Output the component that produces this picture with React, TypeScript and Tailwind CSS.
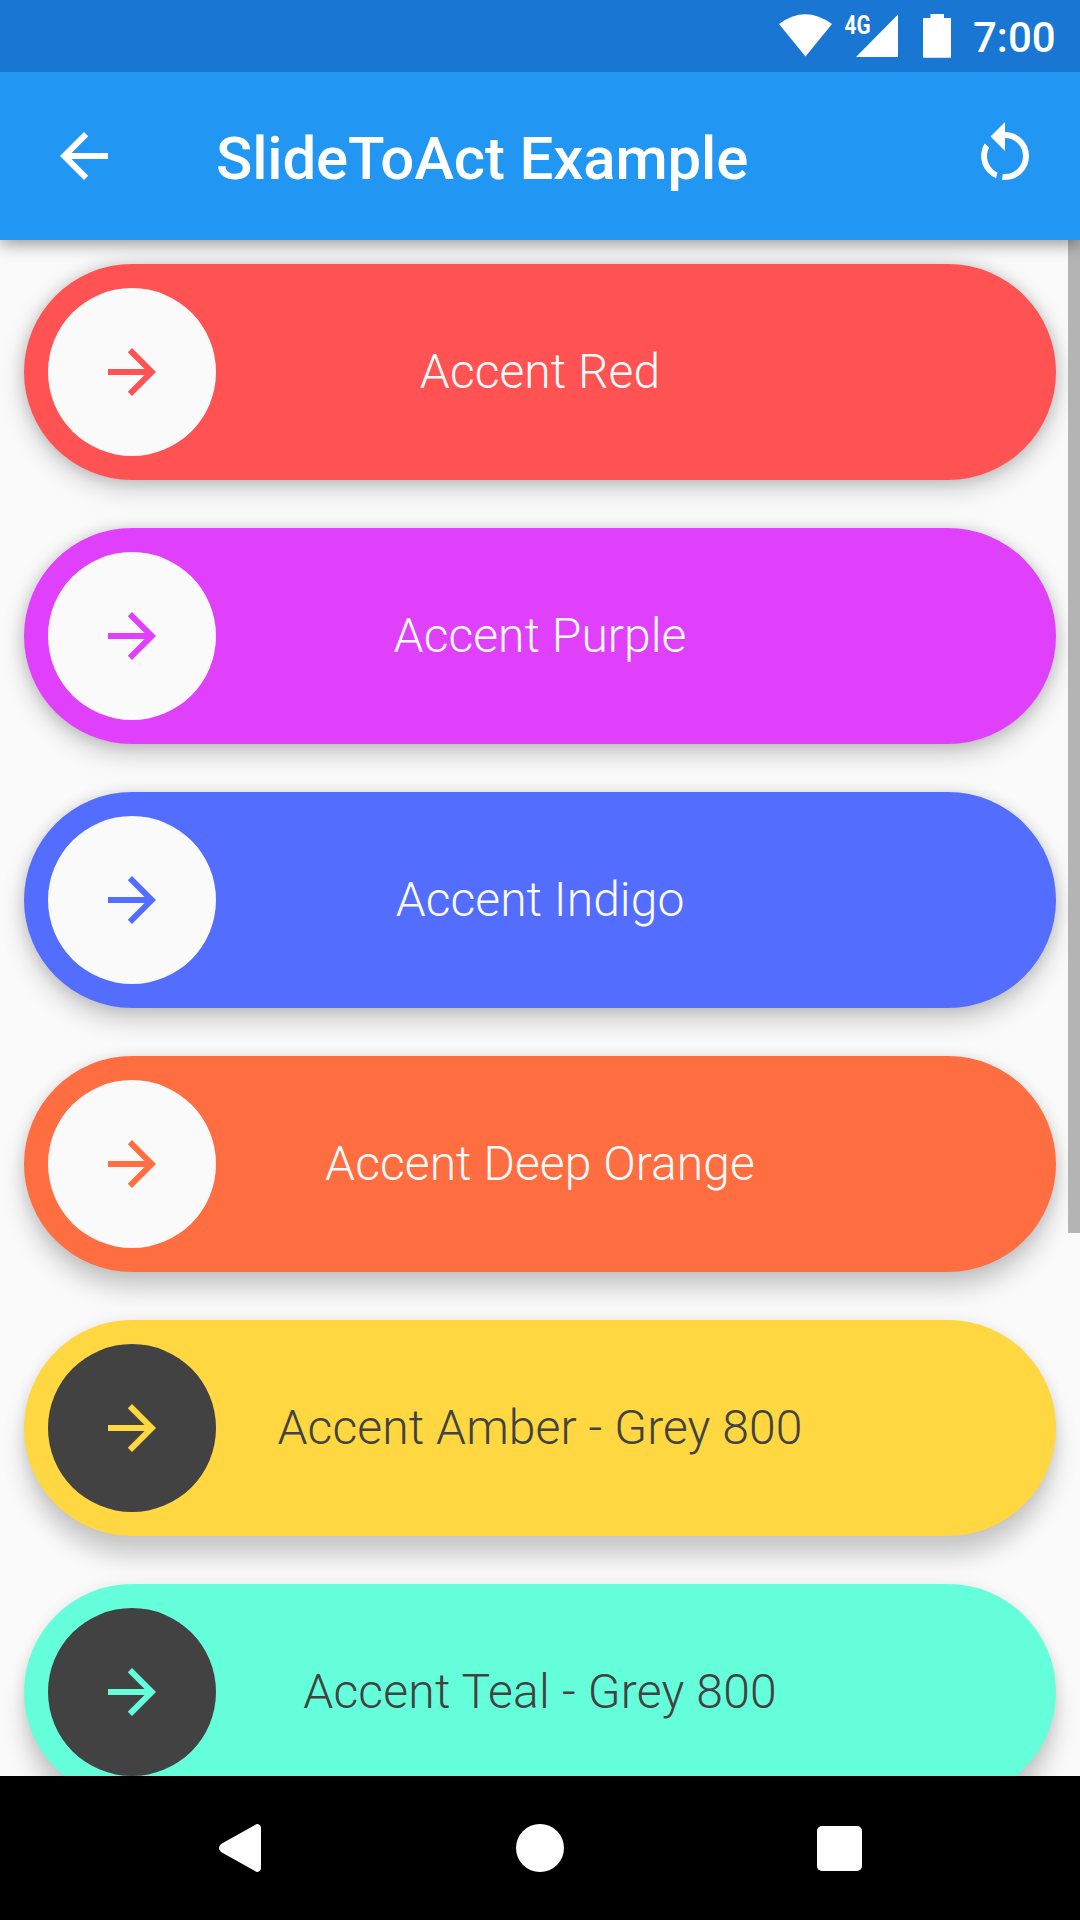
import React from "react";

const sliders = [
  { label: "Accent Red", outer: "bg-[#ff5252] shadow-[0_0_14px_rgba(0,0,0,0.14),0_8px_26px_rgba(0,0,0,0.2)]", inner: "bg-[#fafafa] text-[#ff5252]", text: "text-[#fafafa] tracking-[0.05px]" },
  { label: "Accent Purple", outer: "bg-[#e040fb] shadow-[0_0_14px_rgba(0,0,0,0.13),0_10px_25px_rgba(0,0,0,0.2)]", inner: "bg-[#fafafa] text-[#e040fb]", text: "text-[#fafafa] tracking-[0.05px]" },
  { label: "Accent Indigo", outer: "bg-[#536dfe] shadow-[0_0_14px_rgba(0,0,0,0.12),0_13px_24px_rgba(0,0,0,0.19)]", inner: "bg-[#fafafa] text-[#536dfe]", text: "text-[#fafafa] tracking-[0.05px]" },
  { label: "Accent Deep Orange", outer: "bg-[#ff6e40] shadow-[0_0_14px_rgba(0,0,0,0.1),0_17px_23px_rgba(0,0,0,0.19)]", inner: "bg-[#fafafa] text-[#ff6e40]", text: "text-[#fafafa] tracking-[0.07px]" },
  { label: "Accent Amber - Grey 800", outer: "bg-[#ffd740] shadow-[0_0_14px_rgba(0,0,0,0.08),0_21px_22px_rgba(0,0,0,0.18)]", inner: "bg-[#424242] text-[#ffd740]", text: "text-[#424242] tracking-[0.1px]" },
  { label: "Accent Teal - Grey 800", outer: "bg-[#64ffda] shadow-[0_0_14px_rgba(0,0,0,0.08),0_24px_22px_rgba(0,0,0,0.18)]", inner: "bg-[#424242] text-[#64ffda]", text: "text-[#424242] tracking-[0.2px]" },
];

function ArrowForward() {
  return (
    <svg viewBox="0 0 24 24" className="size-[72px]" fill="currentColor">
      <path d="M12 4l-1.41 1.41L16.17 11H4v2h12.17l-5.58 5.59L12 20l8-8z" />
    </svg>
  );
}

export default function App() {
  return (
    <div className="flex h-[1920px] w-[1080px] flex-col overflow-hidden bg-[#fafafa] font-['Roboto',sans-serif]">
      <div className="z-20 flex h-[72px] shrink-0 items-center bg-[#1976d2] text-white">
        <svg viewBox="0 0 190 72" className="ml-[770px] h-[72px] w-[190px] shrink-0" fill="white">
          <path d="M9 24Q35 4.500 62 24L35.500 56.500Z" />
          <path d="M86 57L128 14.500V57Z" />
          <path d="M160.500 14h13.500v4h7v39.700h-28V18h7.500Z" />
          <text x="74.500" y="33.500" fontSize="25" fontWeight="700" textLength="26" lengthAdjust="spacingAndGlyphs">4G</text>
        </svg>
        <span className="ml-[13px] pt-1 text-[42px] leading-[68px] font-medium">7:00</span>
      </div>
      <header className="z-10 flex h-[168px] shrink-0 items-center bg-[#2196f3] pr-[39px] pl-[48px] text-white shadow-[0_4px_16px_rgba(0,0,0,0.4)]">
        <svg viewBox="0 0 24 24" className="size-[72px]" fill="currentColor">
          <path d="M20 11H7.830l5.590-5.590L12 4l-8 8 8 8 1.410-1.410L7.830 13H20z" />
        </svg>
        <h1 className="ml-[96px] flex-1 pt-[5px] text-[60px] leading-[70px] font-medium tracking-[-0.17px]">SlideToAct Example</h1>
        <svg viewBox="0 0 24 24" className="size-[72px] overflow-visible" fill="currentColor">
          <path d="M12 .670L7.170 5.500 12 10.330V6a6 6 0 0 1 0 12h-.700l-.350 2H12a8 8 0 0 0 0-16z" />
          <path d="M6.700 9.200L5.200 7.800A8 8 0 0 0 9 19.400l.500-1.900A6 6 0 0 1 6.700 9.200z" />
        </svg>
      </header>
      <main className="flex min-h-0 flex-1 justify-between overflow-hidden">
        <div className="flex shrink-0 flex-col gap-[48px] pt-[24px] pl-[24px]">
          {sliders.map((s) => (
            <div key={s.label} className={`grid h-[216px] w-[1032px] shrink-0 items-center rounded-full ${s.outer}`}>
              <div className={`col-start-1 row-start-1 ml-[24px] flex size-[168px] items-center justify-center rounded-full ${s.inner}`}>
                <ArrowForward />
              </div>
              <span className={`col-start-1 row-start-1 text-center text-[48px] leading-[56px] font-light ${s.text}`}>{s.label}</span>
            </div>
          ))}
        </div>
        <div className="z-[1] h-[993px] w-[12px] shrink-0 bg-[#b4b4b4]" />
      </main>
      <nav className="z-10 flex h-[144px] shrink-0 items-center bg-black">
        <svg viewBox="0 0 42 48" className="ml-[219px] h-[48px] w-[42px]" fill="white">
          <path d="M36 1Q38 -.500 40 .500 42 1 42 4V44Q42 47 40 47.500 38 48.500 36 47L2 28Q-2 24 2 20Z" />
        </svg>
        <div className="ml-[255px] size-[48px] rounded-full bg-white" />
        <div className="ml-[253px] size-[45px] rounded-[5px] bg-white" />
      </nav>
    </div>
  );
}
